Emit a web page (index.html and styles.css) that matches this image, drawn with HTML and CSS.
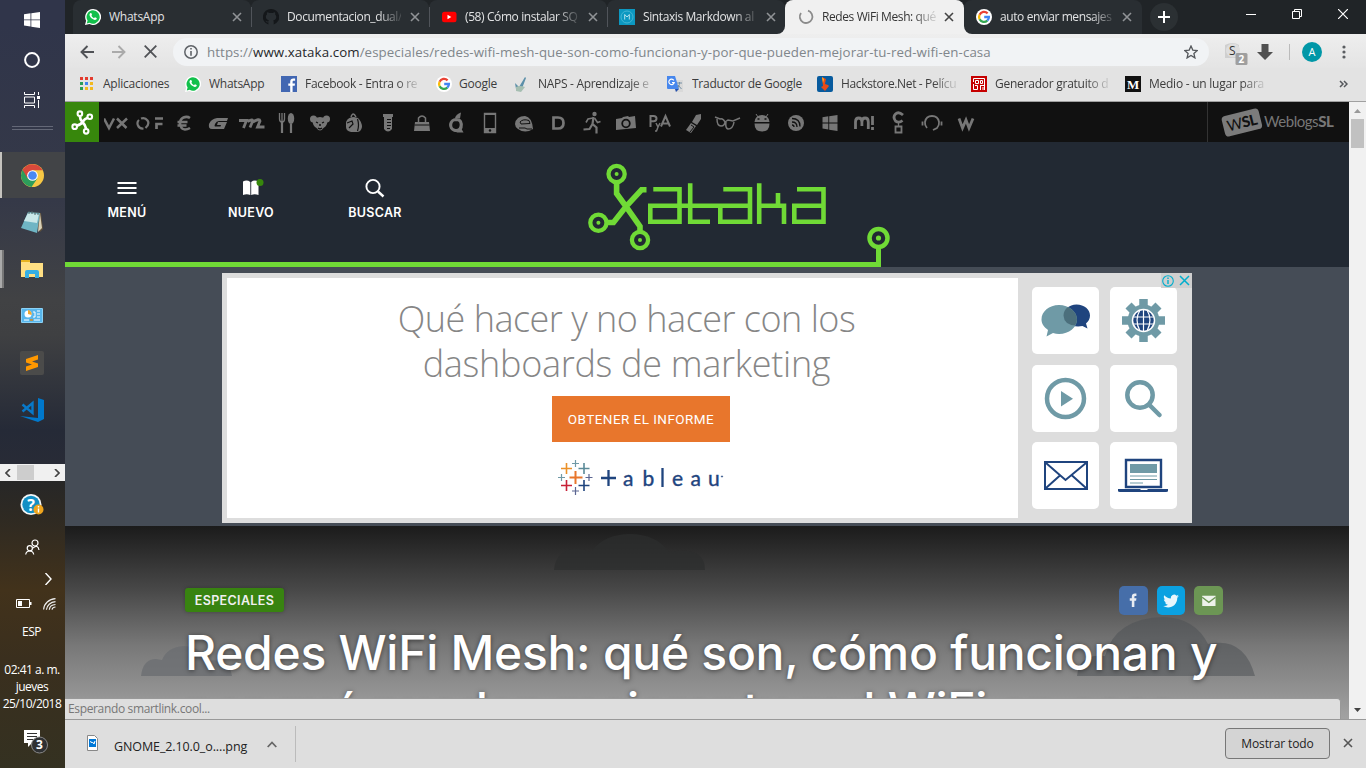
FILE: index.html
```html
<!DOCTYPE html>
<html lang="es">
<head>
<meta charset="utf-8">
<title>Redes WiFi Mesh</title>
<link rel="stylesheet" href="styles.css">
</head>
<body>
<svg class="defs" width="0" height="0">
  <symbol id="google" viewBox="0 0 16 16"><circle cx="8" cy="8" r="8" fill="#fff"/><g fill="none" stroke-width="2.3"><path d="M11.6 4.3A5 5 0 0 0 3.6 5.8" stroke="#ea4335"/><path d="M3.6 5.8a5 5 0 0 0 0 4.5" stroke="#fbbc05"/><path d="M3.6 10.3a5 5 0 0 0 7.7 1.4" stroke="#34a853"/><path d="M11.3 11.7A5 5 0 0 0 12.9 8H8.2" stroke="#4285f4"/></g></symbol>
  <symbol id="whatsapp" viewBox="0 0 16 16"><path d="M8 0a8 8 0 1 1-3.6 15.1L0 16l1.1-4.2A8 8 0 0 1 8 0z" fill="#fff"/><path d="M8 1.3A6.7 6.7 0 1 1 4.6 13.8L1.8 14.4l.8-2.8A6.7 6.7 0 0 1 8 1.3z" fill="#12c04b"/><path d="M5.2 4.2c.5-.4 1-.3 1.2.1l.6 1.4c.1.4-.5.8-.6 1.1.5 1 1.3 1.8 2.5 2.4.4-.1.7-.9 1.1-.9l1.6.8c.3.3.1 1.1-.4 1.5-2.2 1.5-6.4-2.2-6.7-4.500-.1-.8.2-1.500.7-1.900z" fill="#fff"/></symbol>
  <symbol id="close" viewBox="0 0 10 10"><path d="M1 1l8 8M9 1L1 9" fill="none" stroke="currentColor" stroke-width="1.600"/></symbol>
</svg>
<div class="desktop">
  <aside class="taskbar">
    <div class="task t40"><svg width="16" height="16" viewBox="0 0 16 16"><path fill="#fff" d="M0 2.200L6.500 1.300V7.500H0zM7.300 1.200L16 0v7.500H7.300zM0 8.300h6.500v6.200L0 13.600zM7.300 8.300H16V16l-8.700-1.200z"/></svg></div>
    <div class="task t40"><svg width="16" height="16" viewBox="0 0 16 16"><circle cx="8" cy="8" r="6.900" fill="none" stroke="#fff" stroke-width="2"/></svg></div>
    <div class="task t40"><svg width="16" height="16" viewBox="0 0 16 16"><path d="M.5 0v2.500h10V0M.5 16v-2.500h10V16M.5 5h10v6H.5zM14.500 0v3M14.500 8v8" fill="none" stroke="#fff"/><path d="M13 4h3v3h-3z" fill="#fff"/></svg></div>
    <div class="divider"></div>
    <div class="task t46 current"><svg width="23" height="23" viewBox="0 0 24 24"><circle cx="12" cy="12" r="12" fill="#f7c844"/><path d="M12 12L1.600 6A12 12 0 0 0 11 23.900L17 15z" fill="#2d9d5b"/><path d="M1.600 6A12 12 0 0 1 22.500 6.500H12L7 15z" fill="#d8493b"/><circle cx="12" cy="12" r="5.600" fill="#fff"/><circle cx="12" cy="12" r="4.500" fill="#4a89f4"/></svg></div>
    <div class="task t47"><svg width="24" height="24" viewBox="0 0 24 24"><path d="M9 2l12 1 2 16-3 3z" fill="#5e503c"/><path d="M8 2l12 1-3 20L1 18z" fill="#6fb5c4"/><path d="M8 3l11 1-2 9-13-2z" fill="#c9e7e8"/><path d="M20 3l2 15-4 4z" fill="#d9d0b6"/><path d="M9 1v3M12 1v3M15 2v3M18 2v3" stroke="#4f6264"/></svg></div>
    <div class="task t47 open stacked"><svg width="22" height="18" viewBox="0 0 22 18"><path d="M0 0h9v3h13v14H0z" fill="#ffdf83"/><path d="M0 0h9v2H0z" fill="#e7b321"/><path d="M4 17v-5q0-2 2-2h10q2 0 2 2v6h-4v-4H8v4H4z" fill="#36afe4"/></svg></div>
    <div class="task t47"><svg width="22" height="16" viewBox="0 0 22 16"><rect width="22" height="15" rx="1" fill="#8bd2f6"/><rect x="1" y="1" width="20" height="13" fill="#58b6ec"/><circle cx="7" cy="6" r="3.500" fill="#fff"/><path d="M7 6V2a4 4 0 0 1 3.500 5z" fill="#f0a831"/><path d="M12 4h2v5h-2m4-6h3m-3 3h3m-3 3h3M3 12h5m5 0h6" stroke="#fff" fill="none"/><path d="M9 12h3" stroke="#d48920" stroke-width="1.500"/></svg></div>
    <div class="task t47"><svg width="24" height="24" viewBox="0 0 24 24"><rect width="24" height="24" rx="2" fill="#4b4b4a"/><path d="M6 8l12-4v4.500l-6 2 6 2V16L6 20v-4.500l6-2-6-2z" fill="#ff9800"/></svg></div>
    <div class="task t47 open"><svg width="24" height="24" viewBox="0 0 24 24"><path d="M18 0l6 2v19l-6 3L0 18l18 2z" fill="#0078cc"/><path d="M2.500 6.500L12.500 15V5L2.500 13.500" fill="none" stroke="#0878c8" stroke-width="2.400"/></svg></div>
    <div class="fill"></div>
    <div class="hscroll"><svg width="6" height="8" viewBox="0 0 6 8"><path d="M5 0L1 4l4 4" fill="none" stroke="#444" stroke-width="1.700"/></svg><span></span><svg width="6" height="8" viewBox="0 0 6 8"><path d="M1 0l4 4-4 4" fill="none" stroke="#444" stroke-width="1.700"/></svg></div>
    <div class="tray help"><svg width="24" height="22" viewBox="0 0 24 22"><circle cx="11" cy="10.500" r="10.500" fill="#f4f7f8"/><circle cx="11" cy="10.500" r="8.700" fill="#128fc4"/><text x="11" y="16.500" class="q">?</text><circle cx="18.500" cy="15.500" r="5" fill="#efa51e"/><path d="M18.500 12v1.500m0 1v4" stroke="#fff" stroke-width="1.400"/></svg></div>
    <div class="tray people"><svg width="15" height="16" viewBox="0 0 15 16" fill="none" stroke="#fff" stroke-width="1.200"><circle cx="10" cy="4" r="3"/><path d="M8 9q5-4 6 2"/><circle cx="4.800" cy="9.300" r="2.600"/><path d="M.7 15.500q.5-3.500 4-3.500t4 3.500"/></svg></div>
    <div class="tray chev"><svg width="8" height="12" viewBox="0 0 8 12"><path d="M1.500 0l5.500 6-5.500 6" fill="none" stroke="#fff" stroke-width="1.400"/></svg></div>
    <div class="tray status"><svg width="16" height="9" viewBox="0 0 16 9"><path d="M.5.5h13v8H.5z" fill="none" stroke="#fff"/><path d="M2 2h4v5H2zM14 3h1.500v3H14z" fill="#fff"/></svg><svg width="13" height="12" viewBox="0 0 13 12" fill="none" stroke="#eee" stroke-width="1.200"><path d="M.6 11.500C1 5.500 6 1 12.500.700M3.400 11.700C3.800 7.500 7.500 4 12.500 3.700M6.300 11.700c.3-2.700 2.700-5 6.200-5.200M9 11.700c.3-1.500 1.500-2.700 3.500-2.700"/></svg></div>
    <div class="lang">ESP</div>
    <div class="clock"><span>02:41 a. m.</span><span>jueves</span><span>25/10/2018</span></div>
    <div class="notif"><svg width="26" height="26" viewBox="0 0 26 26"><path d="M1 1h16v13H9l-4 4v-4H1z" fill="#fff"/><path d="M4 4.500h10M4 7.500h10M4 10.500h6" stroke="#333"/><circle cx="16.500" cy="16" r="8" fill="#2f3133" stroke="#888"/><text x="16.500" y="20.300" class="count">3</text></svg></div>
  </aside>

  <main class="browser">
    <div class="tabs">
      <div class="tab"><svg class="fav"><use href="#whatsapp"/></svg><span class="ttl w1">WhatsApp</span><svg class="x"><use href="#close"/></svg></div>
      <div class="tab"><svg class="fav" viewBox="0 0 16 16"><path d="M8 0a8 8 0 0 0-2.600 15.600v-2.300c-2 .4-2.500-.8-2.900-1.500 1.300.4 1.600 1 2.900.7.100-.6.300-.9.600-1.100-3.500-.5-4-4.600-2-6-.2-.8-.1-1.600.2-2.200.8 0 1.500.4 2.200.9a8 8 0 0 1 3.400 0c.7-.5 1.400-.9 2.200-.9.300.6.300 1.500.1 2.200 2 1.500 1.500 5.500-2 6 .5.500.6 1 .6 1.700v2.500A8 8 0 0 0 8 0z" fill="#14171a"/></svg><span class="ttl">Documentacion_dual/</span><svg class="x"><use href="#close"/></svg></div>
      <div class="tab"><svg class="fav" viewBox="0 0 16 16"><rect x="1" y="2.700" width="14.500" height="10.500" rx="2.500" fill="#f00"/><path d="M6.500 5.700v4.600L10.300 8z" fill="#fff"/></svg><span class="ttl">(58) Cómo instalar SQ</span><svg class="x"><use href="#close"/></svg></div>
      <div class="tab nosep"><svg class="fav" viewBox="0 0 16 16"><path d="M0 0h16v16H0z" fill="#0c98c1"/><circle cx="8" cy="8" r="6" fill="none" stroke="#45b6d4"/><path d="M5.700 10.500v-5L8 8l2.300-2.500v5" fill="none" stroke="#b2e2ee"/></svg><span class="ttl">Sintaxis Markdown al</span><svg class="x"><use href="#close"/></svg></div>
      <div class="tab active"><svg class="fav" viewBox="0 0 16 16"><path d="M10 1.700A6.300 6.300 0 1 1 3 4" fill="none" stroke="#8b8b8b" stroke-width="1.800"/></svg><span class="ttl">Redes WiFi Mesh: qué</span><svg class="x"><use href="#close"/></svg></div>
      <div class="tab last nosep"><svg class="fav"><use href="#google"/></svg><span class="ttl">auto enviar mensajes</span><svg class="x"><use href="#close"/></svg></div>
      <div class="newtab"><svg width="12" height="12" viewBox="0 0 12 12"><path d="M6 0v12M0 6h12" stroke="#fff" stroke-width="2"/></svg></div>
      <div class="wincontrols"><svg width="10" height="10"><path d="M0 5.500h10" stroke="#fff"/></svg><svg width="10" height="10" fill="none" stroke="#fff"><path d="M.5 2.500h7v7h-7zM2.500 2V.5h7v7H8"/></svg><svg width="10" height="10"><path d="M0 0l10 10M10 0L0 10" stroke="#fff" stroke-width="1.200"/></svg></div>
    </div>

    <div class="toolbar">
      <div class="navbtns"><svg width="14" height="14" viewBox="0 0 14 14" fill="none" stroke="#505256" stroke-width="1.900"><path d="M14 7H1.500M7.500 1l-6 6 6 6"/></svg><svg width="14" height="14" viewBox="0 0 14 14" fill="none" stroke="#aaa" stroke-width="1.900"><path d="M0 7h12.500M6.500 1l6 6-6 6"/></svg><svg width="13" height="13" viewBox="0 0 13 13" stroke="#505256" stroke-width="1.800"><path d="M.7.7l11.600 11.600M12.300.7L.7 12.300"/></svg></div>
      <div class="omnibox"><svg width="14" height="14" viewBox="0 0 14 14"><circle cx="7" cy="7" r="6.200" fill="none" stroke="#5f6368" stroke-width="1.500"/><path d="M7 3v1.600M7 6v4.700" stroke="#5f6368" stroke-width="1.600"/></svg><span class="url">https://<b>www.xataka.com</b>/especiales/redes-wifi-mesh-que-son-como-funcionan-y-por-que-pueden-mejorar-tu-red-wifi-en-casa</span><svg width="14" height="14" viewBox="0 0 14 14"><path d="M7 1l1.800 4.100 4.400.4-3.300 3 1 4.400L7 10.500l-3.900 2.400 1-4.400-3.300-3 4.400-.4z" fill="none" stroke="#55585c" stroke-width="1.300"/></svg></div>
      <div class="exts">
        <svg width="24" height="24" viewBox="0 0 24 24"><path d="M1 4q8-4 14 0v13H1z" fill="#cfcfcf"/><circle cx="9" cy="9.500" r="7" fill="#dedede"/><text x="5" y="13.500" class="exts-s">S</text><rect x="11.500" y="12" width="12" height="12" rx="1.500" fill="#9f9f9f"/><text x="14.500" y="22" class="exts-n">2</text></svg>
        <svg width="16" height="16" viewBox="0 0 16 16"><path d="M4.500 0h7v8H16l-8 8-8-8h4.500z" fill="#505050"/></svg>
        <i class="bar"></i><span class="avatar">A</span>
        <svg width="4" height="14" viewBox="0 0 4 14" fill="#5a5d61"><circle cx="2" cy="2" r="1.600"/><circle cx="2" cy="7" r="1.600"/><circle cx="2" cy="12" r="1.600"/></svg>
      </div>
    </div>

    <div class="bookmarks">
      <div class="bm b1"><svg viewBox="0 0 16 16"><path d="M0 1h3v3H0zM5 1h3v3H5zM10 1h3v3h-3z" fill="#e33b2e"/><path d="M0 6h3v3H0zM0 11h3v3H0z" fill="#2a9d58"/><path d="M5 6h3v3H5z" fill="#3f83ee"/><path d="M10 6h3v3h-3zM5 11h3v3H5zM10 11h3v3h-3z" fill="#f2b91d"/></svg><span>Aplicaciones</span></div>
      <div class="bm b2"><svg><use href="#whatsapp"/></svg><span>WhatsApp</span></div>
      <div class="bm b3"><svg viewBox="0 0 16 16"><path d="M0 0h16v16H0z" fill="#4267b2"/><path d="M9.200 16V9.800H7.300V7.400h1.900V5.700c0-2.200 1.300-3.200 3.100-3.200h1.800v2.300h-1.300c-1 0-1.200.5-1.200 1.200v1.400h2.400l-.3 2.400h-2.100V16z" fill="#fff"/></svg><span class="fade">Facebook - Entra o re</span></div>
      <div class="bm b4"><svg><use href="#google"/></svg><span>Google</span></div>
      <div class="bm b5"><svg viewBox="0 0 16 16"><path d="M2 7l4 4 6-10 1 1-5 13-5-2z" fill="#5b8fa9"/><path d="M3 11q4-2 9 0l-4 5-5-1z" fill="#a5beb1"/></svg><span class="fade">NAPS - Aprendizaje e</span></div>
      <div class="bm b6"><svg viewBox="0 0 16 16"><path d="M6 4h10v12H8z" fill="#d9d9d9"/><path d="M0 0h8l4 13H1q-1 0-1-1z" fill="#4787ed"/><path d="M8 13h4l-3 3z" fill="#2450ad"/><path d="M6.800 4.400A2.700 2.700 0 1 0 7.200 6.500H5" fill="none" stroke="#fff" stroke-width="1.200"/><path d="M10 7h5m-2.500-1v1c0 2-1 4-2 5m.5-3l3.500 4" stroke="#748fa4" fill="none"/></svg><span>Traductor de Google</span></div>
      <div class="bm b7"><svg viewBox="0 0 16 16"><rect width="16" height="16" rx="2" fill="#075b9e"/><path d="M5 1l4 2-1 5 3 1 1 1-4 5-4-4 2-1z" fill="#e64b16"/><path d="M5 1l2 2-1 4z" fill="#ffb52b"/></svg><span class="fade">Hackstore.Net - Pelícu</span></div>
      <div class="bm b8"><svg viewBox="0 0 16 16"><path d="M0 0h16v16H0z" fill="#c60000"/><path d="M2.500 6V2.500h11V14M4.500 4.500h3v3h-3zM9.500 4.500h2v3h-2zM2.500 8v5.500h4v-4H4M9 9.500h4M9.500 9v5M12 11v3" fill="none" stroke="#fff"/></svg><span class="fade">Generador gratuito d</span></div>
      <div class="bm b9"><svg viewBox="0 0 16 16"><path d="M0 0h16v16H0z" fill="#111"/><text x="8" y="12.500" class="med">M</text></svg><span class="fade">Medio - un lugar para</span></div>
      <svg class="more" width="9" height="8" viewBox="0 0 9 8"><path d="M1 1l3 3-3 3M5 1l3 3-3 3" fill="none" stroke="#55585c" stroke-width="1.500"/></svg>
    </div>

    <div class="viewport">
      <div class="page">
        <nav class="network">
          <a class="home"><svg viewBox="0 0 24 24" fill="none" stroke="#fff" stroke-width="2"><circle cx="9.500" cy="3.500" r="2.200"/><circle cx="4.500" cy="16" r="2.200"/><circle cx="15.500" cy="20.500" r="2.200"/><circle cx="19" cy="6.500" r="2.200"/><path d="M9.500 6q0 3 2.500 5.500t3.500 6.500M17 7.500q-3 1-5 4T6.500 15" stroke-width="2.600"/></svg></a>
          <a><svg viewBox="0 0 24 24"><path d="M0 7.500l5 9.500 5-9.500M13 7.500l9.500 9.500M23 7.500L13 17" fill="none" stroke="#777" stroke-width="2.500"/></svg></a>
          <a><svg class="wide" viewBox="0 0 28 24" fill="none" stroke="#777"><path d="M5 7.500Q9 6 11.500 9.500T9.500 17M7.500 17.500Q3.500 18 2 14.500T3 9" stroke-width="2.200"/><path d="M20.500 18v-5h6M19 7.500h8" stroke-width="2.700"/></svg></a>
          <a><svg viewBox="0 0 24 24" fill="none" stroke="#777" stroke-width="2.600"><path d="M18 7Q15 5 11.500 6.500T8 12.500q.5 5.500 5 6 2.500 0 5-1.500M5.500 11h10M5.500 14.500h9"/></svg></a>
          <a><svg viewBox="0 0 24 24"><path d="M22 7H11Q5 8 3 13q-1 5 3 5h12l3-7h-9l-1 3h4l-.5 1.500H9q-1 0 0-2.500 1.500-3 4-3h8z" fill="#777"/></svg></a>
          <a><svg class="wide" viewBox="0 0 28 24"><path d="M1 9.500h7.500L5.500 17M9.500 10.500q6-3 5 0l-2.500 6M15 11q6.500-4 7-1l-2.500 6h7" fill="none" stroke="#777" stroke-width="2.800"/></svg></a>
          <a><svg viewBox="0 0 24 24" fill="none" stroke="#777" stroke-width="1.300"><path d="M5.500 2v6q0 3 2.500 3t2.500-3V2M8 2v9"/><path d="M8 10v12M17 13v9" stroke-width="2.200"/><ellipse cx="17" cy="7.500" rx="3.200" ry="5.500" fill="#777" stroke="none"/></svg></a>
          <a><svg viewBox="0 0 24 24" fill="#777"><circle cx="5.500" cy="8" r="3.500"/><circle cx="18.500" cy="8" r="3.500"/><path d="M4.500 9q7.500-6 15 0 0 6-4 8-3.500 5-7 0-4-2-4-8z"/><path d="M8 11l2 1m6-1l-2 1m-4 5q2 1.500 4 0M11 14h2" stroke="#111" fill="none" stroke-width="1.300"/></svg></a>
          <a><svg viewBox="0 0 24 24" fill="#777"><path d="M4 11q2-5 8-5l4 1q4 4 4 9-1 5-5 5H9q-5-1-5-5z"/><path d="M15.500 8q2 6 0 12M5 12l5-2 1 3-4 4" fill="none" stroke="#111" stroke-width="1.200"/><path d="M9 6q2-6 5 0" fill="none" stroke="#777" stroke-width="1.500"/></svg></a>
          <a><svg viewBox="0 0 24 24"><path d="M7 3h10v3h-1v12q-4 5-8 0V6H7z" fill="#777"/><path d="M11 8.500h4m-4 3h4m-4 3h4m-4 3h3" stroke="#111"/></svg></a>
          <a><svg viewBox="0 0 24 24" fill="#777"><path d="M5 11h14l1 9H4z"/><path d="M8.500 12V7q3.500-4 7 0v5" fill="none" stroke="#777" stroke-width="1.500"/><path d="M4.500 14h15" stroke="#111"/></svg></a>
          <a><svg viewBox="0 0 24 24" fill="none" stroke="#777"><path d="M12 8.500a5.500 5.500 0 1 0 5 8Q18.500 8.500 12 8.500z" stroke-width="3.200"/><path d="M16 15l3.500 6.500h-7z" fill="#777" stroke="none"/><path d="M11 7q1-4 6-5.500l-1 6z" fill="#777" stroke="none"/></svg></a>
          <a><svg viewBox="0 0 24 24"><path d="M6.500 2.500h11v19h-11z" fill="none" stroke="#777" stroke-width="1.400"/><path d="M6 17h12v5H6zM6 2h12v2H6z" fill="#777"/><circle cx="12" cy="19.500" r="1.200" fill="#111"/></svg></a>
          <a><svg viewBox="0 0 24 24"><path d="M3 13Q4 5 13 5q7 1 8 13-8 5-15 0-3-2-3-5z" fill="#777"/><path d="M17 9.500q-6-2-9 1.500l1 2 9-.5zM7 17h6l2 1h5" fill="none" stroke="#111" stroke-width="1"/></svg></a>
          <a><svg viewBox="0 0 24 24"><path d="M7.500 6.500H12q5.500 0 5.500 5.500t-5.500 5.500H7.500z" fill="none" stroke="#777" stroke-width="2.700"/></svg></a>
          <a><svg viewBox="0 0 24 24" fill="none" stroke="#777" stroke-width="1.600"><circle cx="14.500" cy="3" r="2.200" fill="#777" stroke="none"/><path d="M13.500 6l-1 7 4 3.500v6M12.500 13l-3 5-6 .5" stroke-width="2.200"/><path d="M13 7L8 8l-2 3.500M14.500 7l3 4.500 3-1"/></svg></a>
          <a><svg viewBox="0 0 24 24"><path d="M2 8l6-1 1-1 5-1 1 1 6-1 1 12-20 2z" fill="#777"/><circle cx="12" cy="12.500" r="3.800" fill="none" stroke="#111" stroke-width="1.800"/></svg></a>
          <a><svg viewBox="0 0 24 24" fill="none" stroke="#777" stroke-width="2"><path d="M2.500 16V5h3q3 0 3 2.600T5.500 10.300h-3M13 15.500L17.500 5 22 15.500M14.500 12.500h6"/><path d="M8 12l2 4 2-4m-2 4l-1.500 4H7" stroke-width="1.500"/></svg></a>
          <a><svg viewBox="0 0 24 24"><path d="M14 4l5-1v5l-4 6-5-3z" fill="#777"/><path d="M9 12l5 3-5 7-5-3z" fill="#777"/><path d="M9 14l3 2-4 5" fill="none" stroke="#111"/></svg></a>
          <a><svg class="wide" viewBox="0 0 28 24" fill="none" stroke="#777" stroke-width="1.500"><path d="M1 6l5 2q3-1 5 3M11 11l3-2 5 1 7-3M3 8q0 7 4 7t4-5M12 11q-1 6 2 7 5 0 6-7"/></svg></a>
          <a><svg viewBox="0 0 24 24" fill="#777"><path d="M4.500 11a7.500 7 0 0 1 15 0zM4.500 12.500h15q0 8-7.500 8t-7.500-8z"/><path d="M8 6L6 3M16 6l2-3" stroke="#777"/><path d="M7.500 8h2m5 0h2" stroke="#111" stroke-width="1.600"/></svg></a>
          <a><svg viewBox="0 0 24 24"><circle cx="12" cy="12" r="8" fill="#777"/><path d="M8 11q5 0 5 5M8 7.500q8 0 8 8M8 14q2 0 2 2" stroke="#111" stroke-width="1.300" fill="none"/></svg></a>
          <a><svg viewBox="0 0 24 24"><path d="M4.500 6.300l5.800-1V11.500H4.500zM11.200 5.200L19.500 4v7.500h-8.300zM4.500 12.400h5.800v6.200l-5.800-1zM11.200 12.400h8.300V20l-8.300-1.200z" fill="#777"/></svg></a>
          <a><svg viewBox="0 0 24 24" fill="none" stroke="#777" stroke-width="2.800"><path d="M3.500 18V11q0-4 3.200-4t3.200 4v4V11q0-4 3.200-4t3.200 4v7M20.500 5v9M20.500 16v3"/></svg></a>
          <a><svg viewBox="0 0 24 24" fill="none" stroke="#777" stroke-width="2.800"><path d="M17 4q-4.500-4-7.500-1t0 7q3.500 2.500 7-.5"/><path d="M12.500 11v5" stroke-width="1.300"/><path d="M9.500 15.500h6v6h-6z" stroke-width="1.800"/></svg></a>
          <a><svg viewBox="0 0 24 24" fill="none" stroke="#777" stroke-width="1.800"><path d="M7 17Q4.500 14 5 11q1-6 7-6t7 6q.5 3-2 6l-4 2M2.500 10.500v4M21.500 10.500v4"/></svg></a>
          <a><svg viewBox="0 0 24 24"><path d="M5 7.500l3.500 9.500L12 9l3 8 4-9.500" fill="none" stroke="#777" stroke-width="2.800"/></svg></a>
          <div class="wsl"><svg width="42" height="30" viewBox="0 0 42 30"><g transform="rotate(-14 21 15)"><rect x="2" y="4" width="38" height="21" rx="4" fill="#7b7b7b"/><text x="21" y="20" class="wslt">W<tspan class="wslb">SL</tspan></text></g></svg><span>Weblogs<b>SL</b></span></div>
        </nav>

        <header class="masthead">
          <div class="menu">
            <a><svg width="20" height="20" viewBox="0 0 20 20"><path d="M.5 5h19M.5 10h19M.5 15h19" stroke="#fff" stroke-width="2"/></svg>MENÚ</a>
            <a><svg class="book" width="22" height="20" viewBox="0 0 22 20"><path d="M3 3.500q4-2 7.300.5v13q-3.500-1.500-7.300 0zM11.200 4q3-2.500 7.300-.5V17q-3.800-1.500-7.300 0z" fill="#fff"/><circle cx="20" cy="4.500" r="3.500" class="dot"/></svg>NUEVO</a>
            <a><svg width="20" height="20" viewBox="0 0 20 20" fill="none" stroke="#fff" stroke-width="1.900"><circle cx="8" cy="8.500" r="6.600"/><path d="M13 13.500l5.500 5" stroke-width="2.400"/></svg>BUSCAR</a>
          </div>
          <svg class="logo" width="245" height="92" viewBox="585 160 245 92" fill="none" stroke="#70da36"><g stroke-width="4.300"><circle cx="616.600" cy="174" r="8.100"/><circle cx="598.400" cy="222.700" r="8.100"/><circle cx="640" cy="240" r="8.100"/></g><g fill="#70da36" stroke="none"><circle cx="616.600" cy="174" r="2"/><circle cx="598.400" cy="222.700" r="2"/><circle cx="640" cy="240" r="2"/></g><path stroke-width="5.600" d="M616.600 183v10.500L626 206.500l14 20V231M607 222.500h6.500l12.500-16 15.500-16.700h5"/><path stroke-width="4.600" d="M653.300 189.300h26.200v32.500h-29.200V205.800H750M690.200 183.300v38.500H710M723.300 189.300h26.700v32.500h-29.700V205.800M759.200 183.300V224M757 205.800h27V224M778 193v13M797 189.300h26.500v32.500h-29.200V205.800h29.200"/></svg>
          <svg class="circuit" width="825" height="41" viewBox="65 226 825 41"><path d="M65 264.500h813.500V248" fill="none" stroke="#70da36" stroke-width="5"/><circle cx="878.500" cy="238" r="9" fill="none" stroke="#70da36" stroke-width="4.500"/><circle cx="878.500" cy="238" r="2.600" fill="#70da36"/></svg>
        </header>

        <section class="adzone">
          <div class="ad">
            <div class="creative">
              <p class="l1">Qué hacer y no hacer con los</p><p class="l2">dashboards de marketing</p>
              <span class="cta">OBTENER EL INFORME</span>
              <div class="tableau"><svg width="35" height="35" viewBox="0 0 35 35"><path d="M17.500 11v13M11.500 17.500h13" stroke="#e8762c" stroke-width="2"/><path d="M8.500 3v11M3 8.500h11" stroke="#eb9129" stroke-width="1.600"/><path d="M26 3v11M20.500 8.500h11" stroke="#5b8a98" stroke-width="1.600"/><path d="M8.500 20v11M3 25.500h11" stroke="#c72037" stroke-width="1.600"/><path d="M26 20v11M20.500 25.500h11" stroke="#1f447e" stroke-width="1.600"/><path d="M17.500 0v7M14 3.500h7M3.500 14v7M0 17.500h7" stroke="#7099a6" stroke-width="1.200"/><path d="M31 14v7M27.500 17.500h7M17.500 27v8M14 31h7" stroke="#5c6692" stroke-width="1.200"/></svg>
              <svg class="word" width="124" height="26" viewBox="599 465 124 26" fill="none" stroke="#1f447e" stroke-width="2.300"><path d="M607.500 470v16M600 478h15M661.500 468v19"/><text x="622" y="485.500">a</text><text x="641.500" y="485.500">b</text><text x="671" y="485.500">e</text><text x="689.500" y="485.500">a</text><text x="707" y="485.500">u</text><circle cx="721" cy="476.500" r=".6" stroke-width="1"/></svg></div>
            </div>
            <div class="tiles">
              <div><svg viewBox="0 0 67 67"><path d="M44.500 17.500c8 0 13.500 5 13.500 11 0 3-1.500 6-4 8l1.500 5-5-2.500c-10 2-19-3-19-10.500 0-6 5.500-11 13-11z" fill="#1f447e"/><path d="M27 18c10 0 18 6.500 18 14.500S37 47 27 47c-2 0-4-.3-6-1l-6.500 3.500L16 43c-4-3-6.500-6-6.500-10.500C9.500 24.500 17 18 27 18z" fill="#6f9aa6"/><path d="M36 20q9 5 9 12.500-.2 3-2 6-11-1-11.500-10 0-5 4.500-8.500z" fill="#4b6f7c"/></svg></div>
              <div><svg viewBox="0 0 67 67"><g stroke="#6f9aa6" stroke-width="8.500"><path d="M33.500 12v43M12 33.500h43M18.500 18.500l30 30M48.500 18.500l-30 30"/></g><circle cx="33.500" cy="33.500" r="16" fill="#6f9aa6"/><circle cx="33.500" cy="33.500" r="11" fill="#1f447e" stroke="#fff" stroke-width="1.500"/><path d="M23 30h21M23 37h21M33.500 23v21M30 23q-6 10 0 21M37 23q6 10 0 21" fill="none" stroke="#fff" stroke-width="1.200"/></svg></div>
              <div><svg viewBox="0 0 67 67"><circle cx="33.500" cy="33.500" r="18.500" fill="none" stroke="#6f9aa6" stroke-width="4.500"/><path d="M29 26v15.500l12-7.800z" fill="#6f9aa6"/></svg></div>
              <div><svg viewBox="0 0 67 67" fill="none" stroke="#6f9aa6" stroke-width="4.500"><circle cx="30" cy="30" r="12.700"/><path d="M39 39.500l10.500 10.500" stroke-linecap="round"/></svg></div>
              <div><svg viewBox="0 0 67 67" fill="none" stroke="#1f447e" stroke-width="2"><path d="M13 20h42v27H13zM14 21l19.500 17L54 21M14 46l14.500-13M54 46L39.500 33"/></svg></div>
              <div><svg viewBox="0 0 67 67"><path d="M16 18h35v27H16z" fill="none" stroke="#1f447e" stroke-width="2.400"/><path d="M20 22h27v9H20z" fill="#6f9aa6"/><path d="M20 34h27M20 37.500h27M20 41h13" stroke="#6f9aa6"/><path d="M8 47h22l1 1h6l1-1h20v2q0 1-2 1H10q-2 0-2-1z" fill="#1f447e"/></svg></div>
            </div>
            <div class="adchoices"><svg width="12" height="12" viewBox="0 0 12 12" fill="none" stroke="#00aecd"><circle cx="6" cy="6" r="5.300" stroke-width="1.100"/><path d="M6 2.500V4M6 5v4" stroke-width="1.400"/></svg><svg width="11" height="11" viewBox="0 0 11 11" stroke="#00aecd" stroke-width="1.500"><path d="M1 1l9 9M10 1l-9 9"/></svg></div>
          </div>
        </section>

        <section class="hero">
          <svg class="clouds" width="1284" height="193" viewBox="65 526 1284 193"><path d="M554 570q2-21 23-21 7 0 14 3 13-18 39-18t39 18q36-6 36 18z" fill="#2c2e2e" fill-opacity=".7"/><path d="M141 676q2-17 15-17l6 1q5-13 22-14 18 1 23 15 22-4 25 15z" fill="#6b6e72" fill-opacity=".8"/><path d="M1077 676q2-23 28-20 10-38 59-39 31 1 44 27 36-8 47 32z" fill="#4f5256" fill-opacity=".55"/></svg>
          <div class="meta"><span class="pill">ESPECIALES</span><div class="share">
            <a class="fb"><svg viewBox="0 0 28 28"><path d="M12.500 20.500v-6h-2V12h2v-1.600c0-2 1.200-3 3-3h1.500v2.300h-1c-.8 0-1 .4-1 1.100V12h2l-.3 2.500H15v6z" fill="#e8ecf2"/></svg></a>
            <a class="tw"><svg viewBox="0 0 28 28"><path d="M21.500 9.800l-1.700.7 1.200-1.900-2 .9a3.200 3.200 0 0 0-5.500 2.800c-2.600-.1-4.900-1.300-6.400-3.200-.9 1.500-.4 3.200 1 4.200l-1.400-.4c0 1.500 1 2.800 2.500 3.100l-1.400.1c.4 1.200 1.500 2.100 2.900 2.200a6.500 6.500 0 0 1-4.600 1.300c6 3.500 13.700-.2 13.700-8.200z" fill="#e8f6fc"/></svg></a>
            <a class="ml"><svg viewBox="0 0 28 28"><path d="M8 9.500h13v10H8z" fill="#edf2ea"/><path d="M8 11l6.500 5 6.500-5" fill="none" stroke="#6c9654" stroke-width="1.300"/></svg></a></div></div>
          <h1>Redes WiFi Mesh: qué son, cómo funcionan y<br>por qué pueden mejorar tu red WiFi en casa</h1>
          <div class="statusbar">Esperando smartlink.cool...</div>
        </section>
      </div>
      <div class="vscroll"><svg width="7" height="4"><path d="M0 4l3.500-4L7 4z" fill="#999"/></svg><i></i><svg class="dn" width="7" height="4"><path d="M0 0h7L3.500 4z" fill="#444"/></svg></div>
    </div>

    <footer class="shelf">
      <svg width="11" height="16" viewBox="0 0 11 16"><path d="M.5.5h7l3 3v12H.5z" fill="#fff" stroke="#888"/><path d="M2 4h7v8H2z" fill="#0078d7"/><path d="M3.500 6l1 2 1-1 1.500 2 1-3" stroke="#fff" fill="none"/></svg>
      <span class="file">GNOME_2.10.0_o....png</span>
      <svg width="10" height="7" viewBox="0 0 10 7"><path d="M.7 6L5 1.500 9.300 6" fill="none" stroke="#666" stroke-width="1.800"/></svg>
      <i class="sep"></i><span class="showall">Mostrar todo</span><svg class="shelfx" width="10" height="10"><use href="#close"/></svg>
    </footer>
  </main>
</div>
</body>
</html>
```
FILE: styles.css
```css
* { box-sizing: border-box; }
body { margin: 0; overflow: hidden; font: 12px/16px "Open Sans", "Noto Sans", sans-serif; }
svg { display: block; flex: none; }
p, h1 { margin: 0; }
.defs { position: absolute; }
.desktop { display: flex; width: 1366px; height: 768px; }

.taskbar { width: 65px; display: flex; flex-direction: column; color: #fff; background: linear-gradient(#30354a 0, #30354a 25px, #353948 200px, #414244 300px, #3f4042 335px, #252a37 430px, #282b36 464px, #272727 482px, #2f2a22 520px, #42321b 590px, #3a2f1e 660px, #343121 768px); }
.task { display: flex; align-items: center; justify-content: center; border-left: 2px solid transparent; padding-right: 3px; }
.t40 { height: 40px; padding-right: 4px; }
.t46 { height: 46px; }
.t47 { height: 47px; }
.divider { width: 41px; height: 4px; margin: 6px 12px 22px; border: solid #646877; border-width: 1px 0; }
.current { background: #424447; border-color: #c5c3be; }
.open { background: linear-gradient(#c5c3be, #c5c3be) -2px 50% / 2px 38px no-repeat border-box; }
.stacked { background: linear-gradient(90deg, #aaa 2px, #777 2px) 0 50% / 4px 38px no-repeat border-box; }
.fill { flex: 1; }
.hscroll { height: 17px; background: #f0f0f0; display: flex; align-items: center; justify-content: space-between; padding: 0 5px; }
.hscroll span { width: 17px; height: 15px; background: #cdcdcd; margin-right: 15px; }
.tray { display: flex; justify-content: center; align-items: center; }
.help { height: 47px; padding-right: 1px; }
.people { height: 38px; margin-bottom: 1px; }
.chev { height: 24px; padding-left: 31px; }
.status { height: 25px; gap: 11px; padding-left: 7px; }
.q { font: bold 16px "Open Sans", sans-serif; fill: #fff; text-anchor: middle; }
.count { font: bold 12px "Open Sans", sans-serif; fill: #fff; text-anchor: middle; }
.lang { height: 45px; padding-top: 8px; text-align: center; letter-spacing: -.5px; padding-right: 2px; }
.clock { display: flex; flex-direction: column; align-items: center; line-height: 17px; letter-spacing: -.5px; height: 66px; padding-right: 1px; white-space: nowrap; }
.notif { height: 41px; padding: 2px 0 0 23px; }

.browser { flex: 1; min-width: 0; display: flex; flex-direction: column; }
.tabs { height: 34px; background: linear-gradient(#f0f0f0, #f0f0f0) 711px 17px / 200px 17px no-repeat #202427; display: flex; padding-left: 8px; }
.tab { width: 178px; flex: none; padding: 0 10px 0 12px; display: flex; align-items: center; background: #292e32; color: #e2e3e4; border-radius: 8px 8px 0 0; position: relative; }
.tab::after { content: ""; width: 1px; height: 20px; background: #50545a; position: absolute; right: -1px; top: 7px; z-index: 1; }
.nosep::after, .active::after { display: none; }
.fav { width: 16px; height: 16px; margin-right: 8px; }
.x { width: 10px; height: 10px; color: #909396; }
.ttl { width: 114px; flex: none; overflow: hidden; white-space: nowrap; margin-right: 9px; letter-spacing: -.4px; -webkit-mask: linear-gradient(90deg, #000 80%, #0003 98%); }
.w1 { -webkit-mask: none; letter-spacing: -.25px; }
.active { background: #f0f0f0; color: #333; padding-left: 13px; padding-right: 9px; width: 179px; }
.active .ttl, .last .ttl { margin-right: 8px; }
.active .x { color: #444; }
.nosep:not(.last) { border-bottom-right-radius: 8px; }
.last { border-bottom-left-radius: 8px; }
.newtab { width: 28px; height: 28px; margin: 3px 0 0 8px; border-radius: 50%; background: #2b3033; display: flex; align-items: center; justify-content: center; }
.wincontrols { display: flex; gap: 36px; margin-left: auto; padding: 9px 18px 0 0; }

.toolbar { height: 34px; display: flex; align-items: center; background: linear-gradient(#eee, #e4e4e4); padding-top: 1px; }
.navbtns { width: 108px; padding-left: 15px; display: flex; gap: 18px; align-items: center; }
.omnibox { width: 1036px; height: 28px; margin-top: 1px; border-radius: 14px; background: #f1f3f5; display: flex; align-items: center; padding: 0 11px; }
.url { flex: 1; margin-left: 9px; white-space: nowrap; color: #80868b; font-size: 13.300px; letter-spacing: .085px; }
.url b { font-weight: normal; color: #26282b; }
.exts { display: flex; align-items: center; margin-left: 15px; width: 128px; }
.exts svg:nth-child(1) { margin-top: 3px; }
.exts svg:nth-child(2) { margin-left: 9px; }
.exts-s { font: 12px "Open Sans", sans-serif; fill: #333; }
.exts-n { font: bold 10px "Open Sans", sans-serif; fill: #fff; }
.bar { width: 1px; height: 16px; background: #bbb; margin: 0 12px 0 16px; }
.avatar { width: 20px; height: 20px; border-radius: 50%; background: #0097a7; color: #fff; text-align: center; font-size: 11px; line-height: 20px; margin-right: 20px; }
.bookmarks { height: 34px; background: #e3e3e3; border-bottom: 1px solid #a0a0a0; display: flex; align-items: center; padding: 0 18px 1px 15px; }
.bm { display: flex; gap: 8px; align-items: center; color: #3c3c3c; flex: none; white-space: nowrap; letter-spacing: -.25px; }
.bm svg { width: 16px; height: 16px; }
.bm span { flex: 1; overflow: hidden; }
.fade { -webkit-mask: linear-gradient(90deg, #000 80%, #0003 98%); }
.b1 { width: 105px; gap: 7px; }
.b2 { width: 96px; }
.b3 { width: 138px; margin-right: 17px; letter-spacing: -.3px; }
.b4 { width: 77px; gap: 7px; }
.b5 { width: 140px; margin-right: 14px; gap: 9px; letter-spacing: -.3px; }
.b6 { width: 150px; gap: 9px; }
.b7 { width: 139px; margin-right: 15px; letter-spacing: -.35px; }
.b8 { width: 138px; margin-right: 16px; }
.b9 { width: 140px; }
.med { font: bold 13px "Liberation Serif", serif; fill: #fff; text-anchor: middle; }
.more { margin-left: auto; }

.viewport { height: 617px; display: flex; }
.page { width: 1284px; }
.network { height: 40px; background: #111; display: flex; }
.network a { width: 34px; display: flex; align-items: center; justify-content: center; padding-top: 1px; }
.network svg { width: 24px; height: 24px; }
.network svg.wide { width: 28px; height: 24px; }
.network .home { background: #37870c; }
.network .home svg { width: 25px; height: 25px; }
.wsl { margin-left: auto; width: 142px; border-left: 1px solid #333; padding-left: 13px; display: flex; align-items: center; color: #777; font: 15px Lato, sans-serif; letter-spacing: -.45px; padding-bottom: 2px; }
.network .wsl svg { width: 42px; height: 30px; margin-top: 4px; margin-right: 1px; }
.wslt { font: 15px Lato, sans-serif; fill: #111; text-anchor: middle; }
.wslb, .wsl b { font-weight: 900; }
.masthead { height: 125px; background: #222933; position: relative; }
.menu { display: flex; padding: 36px 0 0; }
.menu a { width: 124px; display: flex; flex-direction: column; align-items: center; gap: 7px; color: #fff; font: 600 12.500px/16px Inter, sans-serif; letter-spacing: .3px; }
.book { overflow: visible; }
.dot { fill: #37870c; }
.logo { position: absolute; left: 520px; top: 18px; }
.circuit { position: absolute; left: 0; bottom: 0; }
.adzone { height: 259px; background: #454c56; padding: 6px 0 0 157px; }
.ad { width: 970px; height: 250px; background: #ddd; padding: 5px; display: flex; position: relative; }
.creative { width: 791px; height: 240px; background: #fff; display: flex; flex-direction: column; align-items: center; color: #868686; font: 300 36px/45px "Open Sans", sans-serif; padding-top: 18px; white-space: nowrap; }
.l1 { letter-spacing: -.5px; padding-left: 8px; }
.l2 { letter-spacing: -.3px; padding-left: 8px; }
.cta { width: 178px; height: 46px; margin: 10px 0 0 37px; background: #e8762c; color: #fff; font: 13.500px/46px Roboto, sans-serif; text-align: center; letter-spacing: .45px; }
.tableau { display: flex; align-items: center; gap: 7px; margin: 18px 0 0 37px; }
.word text { font: 21px Lato, sans-serif; fill: #1f447e; stroke-width: .4; }
.tiles { display: grid; grid-template-columns: 67px 67px; grid-auto-rows: 67px; gap: 10.500px 11.400px; padding: 9.400px 0 0 14px; }
.tiles div { background: #fff; border-radius: 5px; }
.adchoices { position: absolute; right: 0; top: 0; width: 31px; height: 15px; background: #cfcfcf; display: flex; align-items: center; gap: 5px; padding-left: 1px; }
.hero { height: 193px; background: linear-gradient(#1b1b1b, #484848 33%, #787878 62%, #a2a2a2); position: relative; overflow: hidden; padding: 60px 126px 0 120px; color: #fff; }
.clouds { position: absolute; left: 0; top: 0; }
.meta { position: relative; display: flex; justify-content: space-between; height: 38px; }
.pill { height: 24px; width: 99px; margin-top: 2px; border-radius: 3px; background: #388310; color: #f0f0f0; text-align: center; font: 600 12.500px/25px Inter, sans-serif; letter-spacing: .35px; box-shadow: 0 0 4px #0004; }
.share { display: flex; gap: 9px; }
.share a { width: 28.700px; height: 29px; border-radius: 5px; }
.fb { background: #466ea9; }
.tw { background: #0ba1e1; }
.ml { background: #6c9654; }
.hero h1 { position: relative; font: 550 48px/57px Inter, sans-serif; letter-spacing: -.280px; white-space: nowrap; text-shadow: 0 1px 5px #0008; }
.statusbar { position: absolute; left: 0; bottom: 0; width: 1276px; height: 21px; background: #dedede; border: solid #999; border-width: 1px 1px 0 0; border-radius: 0 4px 0 0; color: #777; padding: 2px 3px; letter-spacing: -.35px; }
.vscroll { width: 17px; background: #f1f1f1; display: flex; flex-direction: column; align-items: center; padding: 7px 0 7px; }
.vscroll i { width: 13px; height: 29px; background: #c1c1c1; margin-top: 6px; }
.dn { margin-top: auto; }
.shelf { flex: 1; background: #dedede; border-top: 1px solid #999; display: flex; align-items: center; padding-left: 22px; color: #222; white-space: nowrap; }
.shelf > svg:first-child { margin-top: -2px; }
.file { width: 139px; margin: 5px 14px 0 16px; font-size: 12.500px; letter-spacing: -.1px; }
.sep { width: 1px; height: 36px; background: #bbb; margin-left: 18px; }
.showall { margin-left: auto; width: 105px; height: 31px; line-height: 29px; border: 1px solid #777; border-radius: 4px; background: #d4d4d4; text-align: center; margin-top: -2px; letter-spacing: -.1px; }
.shelfx { margin: -2px 13px 0 13px; color: #555; }
```
